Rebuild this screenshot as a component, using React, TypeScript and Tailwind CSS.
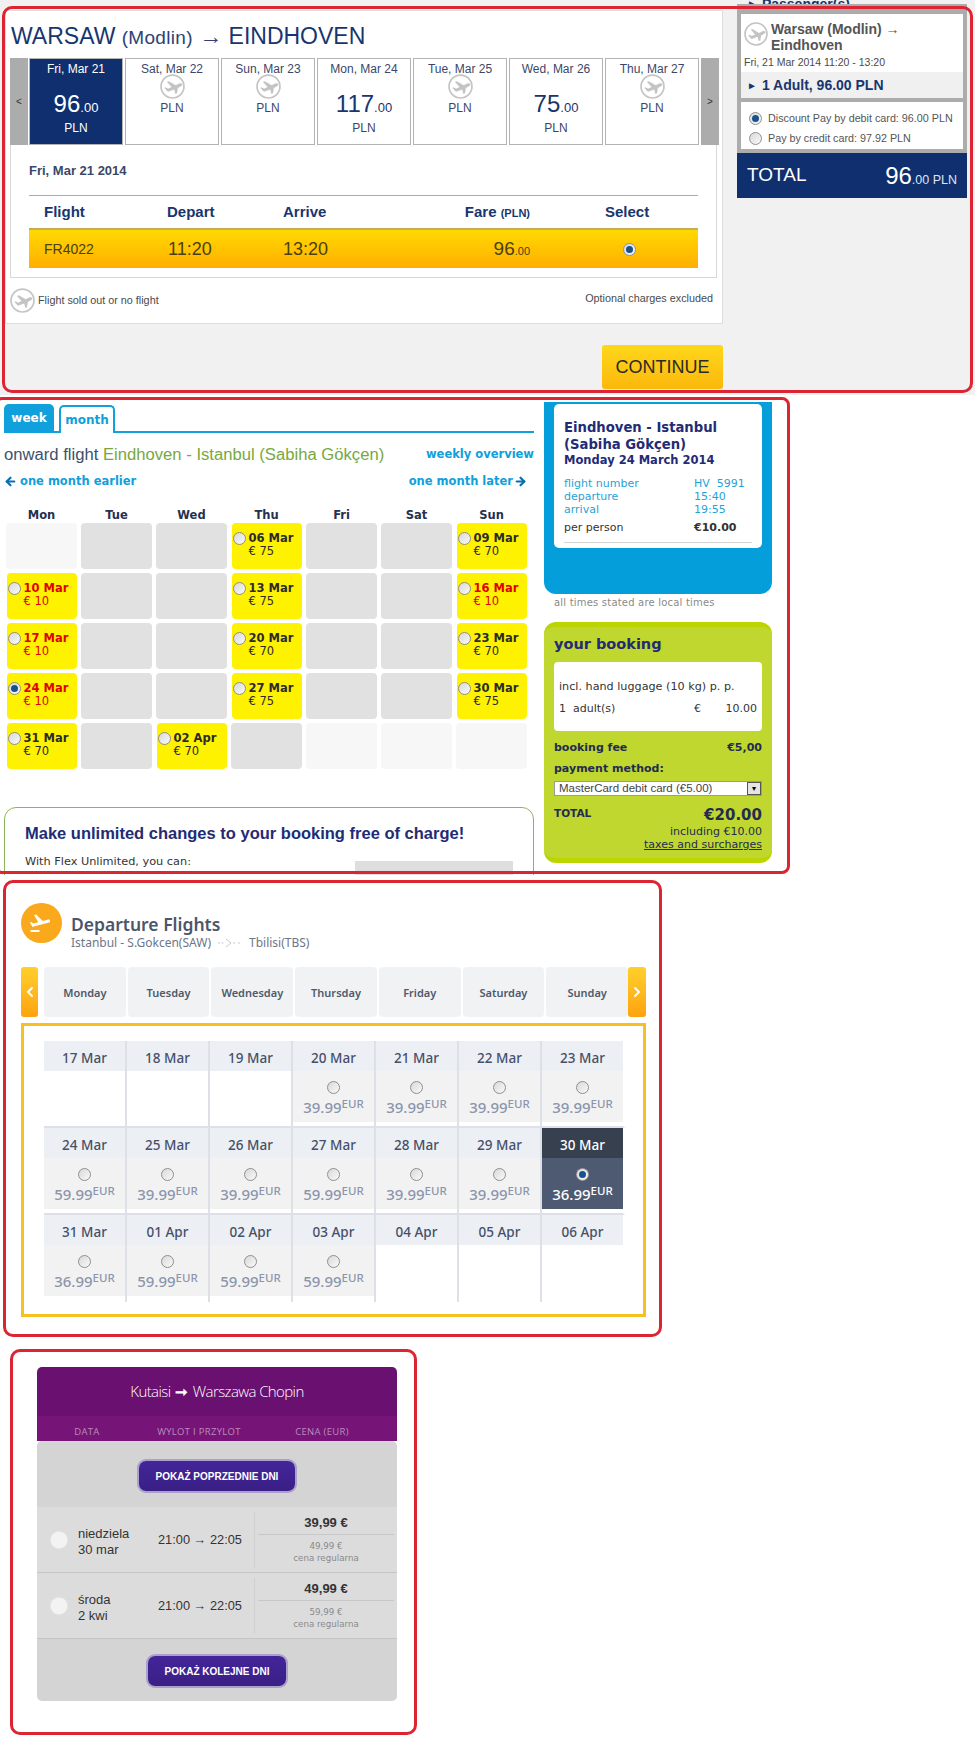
import { ArrowLeft, ArrowRight, ChevronLeft, ChevronRight } from "lucide-react";

const redFrame = "pointer-events-none absolute border-[3px] border-[#dc2433]";

function PlaneMark({ size = 24 }: { size?: number }) {
  return (
    <svg width={size} height={size} viewBox="0 0 24 24" className="shrink-0">
      <circle cx="12" cy="12" r="11" fill="#fff" stroke="#c4c4c4" strokeWidth="1.6" />
      <path
        fill="#c4c4c4"
        d="M21 9.4c-.8-.6-2-.5-3 0l-3 1.5-6.6-4-1.7.7 4.4 4.8-3.3 1.7-2.3-1.3-1.2.6 2.6 3 .8.6 3.9-1.4 2-.8 1.2 4.3 1.5-.6.9-5 3.3-1.9c.8-.5 1.3-1.4.5-2.2z"
      />
    </svg>
  );
}

function Radio({ on = false, className = "" }: { on?: boolean; className?: string }) {
  return (
    <span
      className={`flex h-[13px] w-[13px] shrink-0 items-center justify-center rounded-full border border-[#8f8f8f] bg-linear-to-br from-[#d8d8d8] to-[#fafafa] ${className}`}
    >
      {on && <span className="h-[7px] w-[7px] rounded-full bg-[#17528f]" />}
    </span>
  );
}

const tiles = [
  { d: "Fri, Mar 21", p: "96", on: true },
  { d: "Sat, Mar 22" },
  { d: "Sun, Mar 23" },
  { d: "Mon, Mar 24", p: "117" },
  { d: "Tue, Mar 25" },
  { d: "Wed, Mar 26", p: "75" },
  { d: "Thu, Mar 27" },
];

function DateTile({ d, p, on }: { d: string; p?: string; on?: boolean }) {
  return (
    <div
      className={`flex h-[87px] w-[94px] flex-col items-center border border-[#b4b4b4] pt-[2px] text-[12px] leading-[16px] ${
        on ? "bg-[#0f2f6e] text-white" : "bg-white text-[#3a4768]"
      }`}
    >
      <span>{d}</span>
      {p ? (
        <>
          <span className={`mt-[13px] leading-[28px] ${on ? "text-white" : "text-[#17366f]"}`}>
            <span className="text-[24px]">{p}</span>
            <span className="text-[13px]">.00</span>
          </span>
          <span className="mt-[-2px]">PLN</span>
        </>
      ) : (
        <>
          <span className="mt-[-3px]">
            <PlaneMark size={25} />
          </span>
          <span className="mt-[1px]">PLN</span>
        </>
      )}
    </div>
  );
}

function RyanairPanel() {
  return (
    <section className="relative flex h-[395px] bg-[#f1f1f1] font-['Liberation_Sans',sans-serif]">
      <div className="ml-[5px] w-[718px]">
        <div className="mt-[10px] h-[314px] border border-[#dedede] bg-white pl-[4px]">
          <h1 className="mt-[11px] h-[36px] pl-[1px] text-[23px] leading-[28px] text-[#17366f]">
            WARSAW <span className="text-[19px] tracking-[0.3px] text-[#2e4272]">(Modlin)</span>{" "}
            <span className="text-[#2e4272]">→</span> EINDHOVEN
          </h1>
          <div className="flex h-[87px] w-[709px]">
            <div className="flex w-[18px] items-center justify-center bg-[#acacac] text-[10px] text-[#333]">&lt;</div>
            <div className="ml-[1px] flex gap-[2px]">
              {tiles.map((t) => (
                <DateTile key={t.d} {...t} />
              ))}
            </div>
            <div className="ml-[2px] flex w-[18px] items-center justify-center bg-[#acacac] text-[10px] text-[#333]">&gt;</div>
          </div>
          <div className="h-[133px] w-[707px] border-x border-b border-[#d8d8d8] px-[18px]">
            <p className="pt-[18px] text-[13px] font-bold leading-[16px] text-[#3a4768]">Fri, Mar 21 2014</p>
            <div className="mt-[16px] grid h-[33px] grid-cols-[123px_116px_179px_68px_1fr] items-center border-t border-[#aaaaaa] pl-[15px] text-[15px] font-bold text-[#17366f]">
              <span>Flight</span>
              <span>Depart</span>
              <span>Arrive</span>
              <span className="whitespace-nowrap text-right">
                Fare <span className="text-[11px]">(PLN)</span>
              </span>
              <span className="pl-[75px]">Select</span>
            </div>
            <div className="grid h-[40px] grid-cols-[124px_115px_179px_68px_1fr] items-center border-t-2 border-[#c5ac55] bg-linear-to-b from-[#ffd900] to-[#ffae00] pl-[15px] text-[#4a3f10]">
              <span className="text-[14px]">FR4022</span>
              <span className="text-[18px]">11:20</span>
              <span className="text-[18px]">13:20</span>
              <span className="text-right">
                <span className="text-[19px]">96</span>
                <span className="text-[11px]">.00</span>
              </span>
              <span className="pl-[93px]">
                <Radio on className="bg-white" />
              </span>
            </div>
          </div>
          <div className="mt-[10px] flex w-[703px] items-center justify-between text-[10.8px] text-[#4a4a4a]">
            <span className="flex items-center gap-[3px]">
              <PlaneMark size={25} />
              <span>Flight sold out or no flight</span>
            </span>
            <span className="pb-[4px]">Optional charges excluded</span>
          </div>
        </div>
        <div className="mt-[21px] flex justify-end">
          <button
            type="button"
            className="h-[44px] w-[121px] rounded-[3px] bg-linear-to-b from-[#ffd71a] to-[#fbb80c] text-[18px] text-[#2a2a2a]"
          >
            CONTINUE
          </button>
        </div>
      </div>

      <aside className="ml-[14px] w-[230px]">
        <div className="flex h-[4px] gap-[5px] overflow-hidden pl-[10px] text-[14px] font-bold leading-[8px] text-[#17366f]">
          <span className="text-[10px]">►</span>
          <span>Passenger(s)</span>
        </div>
        <div className="mt-[0px] border-x-4 border-y-[10px] border-b-4 border-[#acacac] bg-white">
          <div className="h-[58px] px-[3px]">
            <div className="flex gap-[3px] pt-[8px]">
              <PlaneMark size={24} />
              <p className="mt-[-1px] text-[14px] font-bold leading-[16px] text-[#555]">
                Warsaw (Modlin) →<br />
                Eindhoven
              </p>
            </div>
            <p className="mt-[2px] text-[10.5px] leading-[14px] text-[#4a4a4a]">Fri, 21 Mar 2014 11:20 - 13:20</p>
          </div>
          <div className="flex h-[26px] items-center gap-[5px] bg-[#f0f0f0] pl-[6px] text-[14px] font-bold text-[#17366f]">
            <span className="text-[10px]">►</span>
            <span>1 Adult, 96.00 PLN</span>
          </div>
        </div>
        <div className="border-x-4 border-b-4 border-[#acacac] bg-white px-[8px] pt-[7px] text-[10.75px] leading-[19px] text-[#555]">
          <div className="flex items-center gap-[6px]">
            <Radio on />
            <span className="whitespace-nowrap">Discount Pay by debit card: 96.00 PLN</span>
          </div>
          <div className="flex h-[21px] items-center gap-[6px]">
            <Radio />
            <span className="whitespace-nowrap">Pay by credit card: 97.92 PLN</span>
          </div>
        </div>
        <div className="flex h-[45px] items-center justify-between bg-[#0f2f6e] px-[10px] text-white">
          <span className="text-[19px]">TOTAL</span>
          <span>
            <span className="text-[24px]">96</span>
            <span className="text-[12.5px] text-[#dfe5f2]">.00 PLN</span>
          </span>
        </div>
      </aside>

      <div className={`${redFrame} left-[2px] top-[6px] h-[387px] w-[971px] rounded-[10px]`} />
    </section>
  );
}

type MonthCell = { d?: string; p?: string; hot?: boolean; on?: boolean; pale?: boolean };

const monthRows: MonthCell[][] = [
  [{ pale: true }, {}, {}, { d: "06 Mar", p: "75" }, {}, {}, { d: "09 Mar", p: "70" }],
  [{ d: "10 Mar", p: "10", hot: true }, {}, {}, { d: "13 Mar", p: "75" }, {}, {}, { d: "16 Mar", p: "10", hot: true }],
  [{ d: "17 Mar", p: "10", hot: true }, {}, {}, { d: "20 Mar", p: "70" }, {}, {}, { d: "23 Mar", p: "70" }],
  [{ d: "24 Mar", p: "10", hot: true, on: true }, {}, {}, { d: "27 Mar", p: "75" }, {}, {}, { d: "30 Mar", p: "75" }],
  [{ d: "31 Mar", p: "70" }, {}, { d: "02 Apr", p: "70" }, {}, { pale: true }, { pale: true }, { pale: true }],
];

function MonthTile({ c }: { c: MonthCell }) {
  if (!c.d) {
    return <div className={`h-[46px] rounded-[4px] ${c.pale ? "bg-[#f7f7f7]" : "bg-[#e1e1e1]"}`} />;
  }
  return (
    <div className={`mx-[0.5px] flex h-[46px] rounded-[4px] bg-[#fff200] pl-[1px] pt-[9px] text-[11.5px] leading-[13px] ${c.hot ? "text-[#e00000]" : "text-[#2b2b2b]"}`}>
      <Radio on={c.on} />
      <div className="ml-[3px]">
        <div className="font-bold">{c.d}</div>
        <div>€ {c.p}</div>
      </div>
    </div>
  );
}

function CorendonPanel() {
  return (
    <section className="relative flex h-[480px] overflow-hidden bg-white font-['DejaVu_Sans',sans-serif]">
      <div className="ml-[4px] w-[530px]">
        <div className="mt-[10px] flex h-[28px] items-end border-b-2 border-[#10a0dc] text-[12px] font-bold">
          <span className="flex h-[27px] w-[50px] items-center justify-center rounded-t-[5px] bg-[#10a0dc] text-white">week</span>
          <span className="relative top-[2px] ml-[5px] flex h-[28px] w-[56px] items-center justify-center rounded-t-[5px] border-2 border-b-0 border-[#10a0dc] bg-white text-[#10a0dc]">
            month
          </span>
        </div>
        <div className="mt-[12px] flex items-center justify-between">
          <p className="font-['Liberation_Sans',sans-serif] text-[16.65px] leading-[20px] text-[#40506e]">
            onward flight <span className="text-[#77a83e]">Eindhoven - Istanbul (Sabiha Gökçen)</span>
          </p>
          <a className="text-[11.5px] font-bold text-[#10a0dc]">weekly overview</a>
        </div>
        <div className="mt-[8px] flex items-center justify-between pr-[7px] text-[11.5px] font-bold text-[#10a0dc]">
          <a className="flex items-center gap-[3px]">
            <ArrowLeft size={13} strokeWidth={4} className="text-[#0b6fae]" />
            one month earlier
          </a>
          <a className="flex items-center gap-[1px]">
            one month later
            <ArrowRight size={13} strokeWidth={4} className="text-[#0b6fae]" />
          </a>
        </div>
        <div className="ml-[2px] mt-[21px] grid w-[521px] grid-cols-7 gap-x-[4px] gap-y-[4px]">
          {["Mon", "Tue", "Wed", "Thu", "Fri", "Sat", "Sun"].map((d) => (
            <div key={d} className="h-[8px] text-center text-[11.5px] font-bold leading-[8px] text-[#26304f]">
              {d}
            </div>
          ))}
          {monthRows.flat().map((c, i) => (
            <MonthTile key={i} c={c} />
          ))}
        </div>
        <div className="mt-[38px] h-[80px] rounded-t-[12px] border border-[#8fb55a] pl-[20px] pt-[15px]">
          <h2 className="font-['Liberation_Sans',sans-serif] text-[16.5px] font-bold leading-[20px] text-[#232b75]">
            Make unlimited changes to your booking free of charge!
          </h2>
          <div className="flex items-start justify-between">
            <p className="mt-[12px] text-[11.3px] leading-[14px] text-[#333]">With Flex Unlimited, you can:</p>
            <div className="mr-[20px] mt-[18px] h-[30px] w-[158px] bg-[#dedede]" />
          </div>
        </div>
      </div>

      <aside className="ml-[10px] w-[228px] text-[11px]">
        <div className="mt-[7px] h-[192px] rounded-b-[12px] bg-[#049fdb] px-[10px] pt-[2px]">
          <div className="h-[144px] rounded-[5px] bg-white px-[10px] pt-[15px]">
            <p className="whitespace-nowrap text-[13.2px] font-bold leading-[17px] text-[#232b75]">
              Eindhoven - Istanbul
              <br />
              (Sabiha Gökçen)
            </p>
            <p className="text-[11.5px] font-bold leading-[15px] text-[#232b75]">Monday 24 March 2014</p>
            <div className="mt-[9px] grid grid-cols-[130px_1fr] leading-[13px] text-[#1fa3d8]">
              <span>flight number</span>
              <span>HV&nbsp; 5991</span>
              <span>departure</span>
              <span>15:40</span>
              <span>arrival</span>
              <span>19:55</span>
            </div>
            <div className="mt-[5px] grid grid-cols-[130px_1fr] border-b border-[#d4d4d4] pb-[8px] leading-[13px] text-[#333]">
              <span>per person</span>
              <span className="font-bold">€10.00</span>
            </div>
          </div>
        </div>
        <p className="mt-[2px] pl-[10px] text-[10px] leading-[14px] tracking-[0.2px] text-[#8a8a8a]">all times stated are local times</p>
        <div className="mt-[12px] h-[241px] rounded-[12px] border-y-[5px] border-[#bcd400] bg-[#c0d72f] px-[10px] text-[#232b4f]">
          <h3 className="pt-[8px] text-[14.5px] font-bold leading-[18px] text-[#232b75]">your booking</h3>
          <div className="mt-[9px] h-[69px] rounded-[4px] bg-white px-[5px] pt-[18px] text-[#333]">
            <p className="whitespace-nowrap text-[11.2px] leading-[14px]">incl. hand luggage (10 kg) p. p.</p>
            <div className="mt-[8px] flex justify-between leading-[14px]">
              <span>1&nbsp; adult(s)</span>
              <span className="flex w-[63px] justify-between">
                <span>€</span>
                <span>10.00</span>
              </span>
            </div>
          </div>
          <div className="mt-[10px] flex justify-between font-bold leading-[14px]">
            <span>booking fee</span>
            <span>€5,00</span>
          </div>
          <p className="mt-[7px] font-bold leading-[14px]">payment method:</p>
          <div className="mt-[5px] flex h-[15px] items-center justify-between border border-[#9a9a9a] bg-white pl-[4px] font-['Liberation_Sans',sans-serif] text-[11.5px] text-[#444]">
            <span>MasterCard debit card (€5.00)</span>
            <span className="flex h-[13px] w-[14px] items-center justify-center border border-[#555] bg-[#e4e4e4] text-[8px] text-black">▾</span>
          </div>
          <div className="mt-[9px] flex items-start justify-between">
            <span className="pt-[1px] text-[10.5px] font-bold leading-[14px]">TOTAL</span>
            <span className="text-[15px] font-bold leading-[20px]">€20.00</span>
          </div>
          <p className="text-right leading-[13px]">including €10.00</p>
          <p className="text-right leading-[14px] underline">taxes and surcharges</p>
        </div>
      </aside>

      <div className={`${redFrame} left-[-6px] top-[2px] h-[477px] w-[796px] rounded-[8px]`} />
    </section>
  );
}

const weekDays = ["Monday", "Tuesday", "Wednesday", "Thursday", "Friday", "Saturday", "Sunday"];

type FareCell = { d: string; p?: string; on?: boolean };

const fareRows: FareCell[][] = [
  [
    { d: "17 Mar" },
    { d: "18 Mar" },
    { d: "19 Mar" },
    { d: "20 Mar", p: "39.99" },
    { d: "21 Mar", p: "39.99" },
    { d: "22 Mar", p: "39.99" },
    { d: "23 Mar", p: "39.99" },
  ],
  [
    { d: "24 Mar", p: "59.99" },
    { d: "25 Mar", p: "39.99" },
    { d: "26 Mar", p: "39.99" },
    { d: "27 Mar", p: "59.99" },
    { d: "28 Mar", p: "39.99" },
    { d: "29 Mar", p: "39.99" },
    { d: "30 Mar", p: "36.99", on: true },
  ],
  [
    { d: "31 Mar", p: "36.99" },
    { d: "01 Apr", p: "59.99" },
    { d: "02 Apr", p: "59.99" },
    { d: "03 Apr", p: "59.99" },
    { d: "04 Apr" },
    { d: "05 Apr" },
    { d: "06 Apr" },
  ],
];

function FareCellView({ c, last, lastRow }: { c: FareCell; last: boolean; lastRow: boolean }) {
  return (
    <div className={`h-[87px] border-r-2 ${last ? "border-r-white" : "border-r-[#dde0e6]"} ${lastRow ? "" : "border-b-2 border-b-[#dde0e6]"}`}>
      <div className={`flex h-[30px] items-center justify-center pt-[4px] text-[13.5px] font-medium ${c.on ? "bg-[#36404f] text-white" : "bg-[#eceff3] text-[#46506a]"}`}>
        {c.d}
      </div>
      {c.p && (
        <div className={`flex h-[51px] flex-col items-center pt-[10px] font-medium ${c.on ? "bg-[#4d5a72] text-white" : "bg-[#f2f2f2] text-[#8b95ab]"}`}>
          <Radio on={c.on} className={c.on ? "bg-white" : ""} />
          <span className="mt-[3px] whitespace-nowrap text-[15px] leading-[20px]">
            {c.p}
            <span className="relative top-[-5px] text-[11.5px]">EUR</span>
          </span>
        </div>
      )}
    </div>
  );
}

function PegasusPanel() {
  return (
    <section className="relative h-[465px] bg-white font-['Noto_Sans',sans-serif]">
      <div className="ml-[21px] flex pt-[28px]">
        <div className="flex h-[40px] w-[41px] items-center justify-center rounded-full bg-[#f9a91b] pr-[3px] text-white">
          <svg width="24" height="24" viewBox="0 0 24 24" fill="currentColor">
            <path d="M2.5 19h9v2h-9zm19.57-9.36c-.21-.8-1.04-1.28-1.84-1.06L14.92 10l-6.9-6.43-1.93.51 4.14 7.17-4.97 1.33-1.97-1.54-1.45.39 1.82 3.16.77 1.33 1.6-.43 5.31-1.42 4.35-1.16L21 11.49c.81-.23 1.28-1.05 1.07-1.85z" />
          </svg>
        </div>
        <div className="ml-[9px] mt-[10px]">
          <h2 className="text-[17.5px] font-semibold leading-[22px] text-[#4b566b]">Departure Flights</h2>
          <p className="flex items-center whitespace-nowrap text-[12px] leading-[15px] text-[#6d7686]">
            Istanbul - S.Gokcen(SAW)
            <svg width="24" height="10" viewBox="0 0 24 10" className="mx-[7px]">
              <path d="M0 5h6M15 5h3M20 5h3" stroke="#c5cad3" strokeDasharray="2 1.5" fill="none" />
              <path d="M8 1l5 4-5 4" stroke="#c5cad3" fill="none" />
            </svg>
            Tbilisi(TBS)
          </p>
        </div>
      </div>

      <div className="ml-[21px] mt-[17px] flex h-[50px] w-[625px]">
        <div className="flex w-[17px] items-center justify-center rounded-[3px] bg-linear-to-b from-[#ffcf2b] to-[#fda30f] text-white">
          <ChevronLeft size={16} strokeWidth={3} />
        </div>
        <div className="ml-[6px] grid w-[584px] grid-cols-7 gap-[2px]">
          {weekDays.map((d) => (
            <div key={d} className="flex items-center justify-center rounded-[4px] bg-[#f1f2f3] pt-[2px] text-[11px] font-semibold text-[#4f596c]">
              {d}
            </div>
          ))}
        </div>
        <div className="flex w-[18px] items-center justify-center rounded-[3px] bg-linear-to-b from-[#ffcf2b] to-[#fda30f] text-white">
          <ChevronRight size={16} strokeWidth={3} />
        </div>
      </div>

      <div className="ml-[21px] mt-[6px] h-[294px] w-[625px] border-[3px] border-[#f5c020] pl-[20px] pt-[15px]">
        <div className="grid w-[581px] grid-cols-7">
          {fareRows.flatMap((row, r) =>
            row.map((c, i) => <FareCellView key={c.d} c={c} last={i === 6} lastRow={r === 2} />)
          )}
        </div>
      </div>

      <div className={`${redFrame} left-[3px] top-[5px] h-[457px] w-[659px] rounded-[10px]`} />
    </section>
  );
}

const wizzRows = [
  { day: "niedziela", date: "30 mar", price: "39,99 €", regular: "49,99 €" },
  { day: "środa", date: "2 kwi", price: "49,99 €", regular: "59,99 €" },
];

function WizzButton({ label, w }: { label: string; w: string }) {
  return (
    <button
      type="button"
      className={`h-[30px] rounded-[7px] bg-linear-to-b from-[#43259a] to-[#3a1f85] text-[10px] font-bold text-white ring-2 ring-[#ab9fcb] ${w}`}
    >
      {label}
    </button>
  );
}

function WizzPanel() {
  return (
    <section className="relative h-[409px] bg-white pl-[37px] pt-[27px] font-['Liberation_Sans',sans-serif]">
      <div className="w-[360px] overflow-hidden rounded-[5px]">
        <div className="flex h-[49px] items-center justify-center bg-[#6a1070] font-['Open_Sans',sans-serif] text-[15px] font-light tracking-[-0.6px] text-white">
          Kutaisi <span className="mx-[5px] text-[15px] font-bold">➞</span> Warszawa Chopin
        </div>
        <div className="relative h-[25px] bg-[#761477] font-['Open_Sans',sans-serif] text-[9.5px] font-medium tracking-[0.3px] text-[#b98dbd]">
          <div className="grid grid-cols-[100px_124px_1fr] pt-[9px] text-center">
            <span>DATA</span>
            <span>WYLOT I PRZYLOT</span>
            <span className="pr-[14px]">CENA (EUR)</span>
          </div>
        </div>
        <div className="h-[260px] rounded-t-[5px] bg-[#d4d4d4]">
          <div className="flex h-[66px] items-center justify-center pt-[4px]">
            <WizzButton label="POKAŻ POPRZEDNIE DNI" w="w-[156px]" />
          </div>
          {wizzRows.map((r) => (
            <div key={r.day} className="flex h-[66px] items-center border-b border-[#c4c4c4] bg-[#dcdcdc]">
              <span className="ml-[14px] h-[16px] w-[16px] rounded-full bg-[#f3f3f3] shadow-[0_0_2px_#fff]" />
              <span className="ml-[11px] mt-[4px] w-[80px] text-[13px] leading-[16px] text-[#333]">
                {r.day}
                <br />
                {r.date}
              </span>
              <span className="w-[96px] text-[12.8px] text-[#333]">21:00 → 22:05</span>
              <div className="flex h-[56px] flex-1 flex-col items-center border-l border-[#d0d0d0]">
                <span className="pt-[2px] text-[13px] font-bold leading-[18px] text-[#333]">{r.price}</span>
                <span className="mt-[2px] w-[136px] border-t border-[#c8c8c8] pt-[5px] text-center font-['DejaVu_Sans',sans-serif] text-[8.7px] leading-[12.5px] text-[#8a8a8a]">
                  {r.regular}
                  <br />
                  cena regularna
                </span>
              </div>
            </div>
          ))}
          <div className="flex h-[62px] items-center justify-center pt-[2px]">
            <WizzButton label="POKAŻ KOLEJNE DNI" w="w-[138px]" />
          </div>
        </div>
      </div>

      <div className={`${redFrame} left-[10px] top-[9px] h-[386px] w-[407px] rounded-[10px]`} />
    </section>
  );
}

export default function App() {
  return (
    <div className="h-[1749px] w-[975px] overflow-hidden bg-white">
      <RyanairPanel />
      <CorendonPanel />
      <PegasusPanel />
      <WizzPanel />
    </div>
  );
}
